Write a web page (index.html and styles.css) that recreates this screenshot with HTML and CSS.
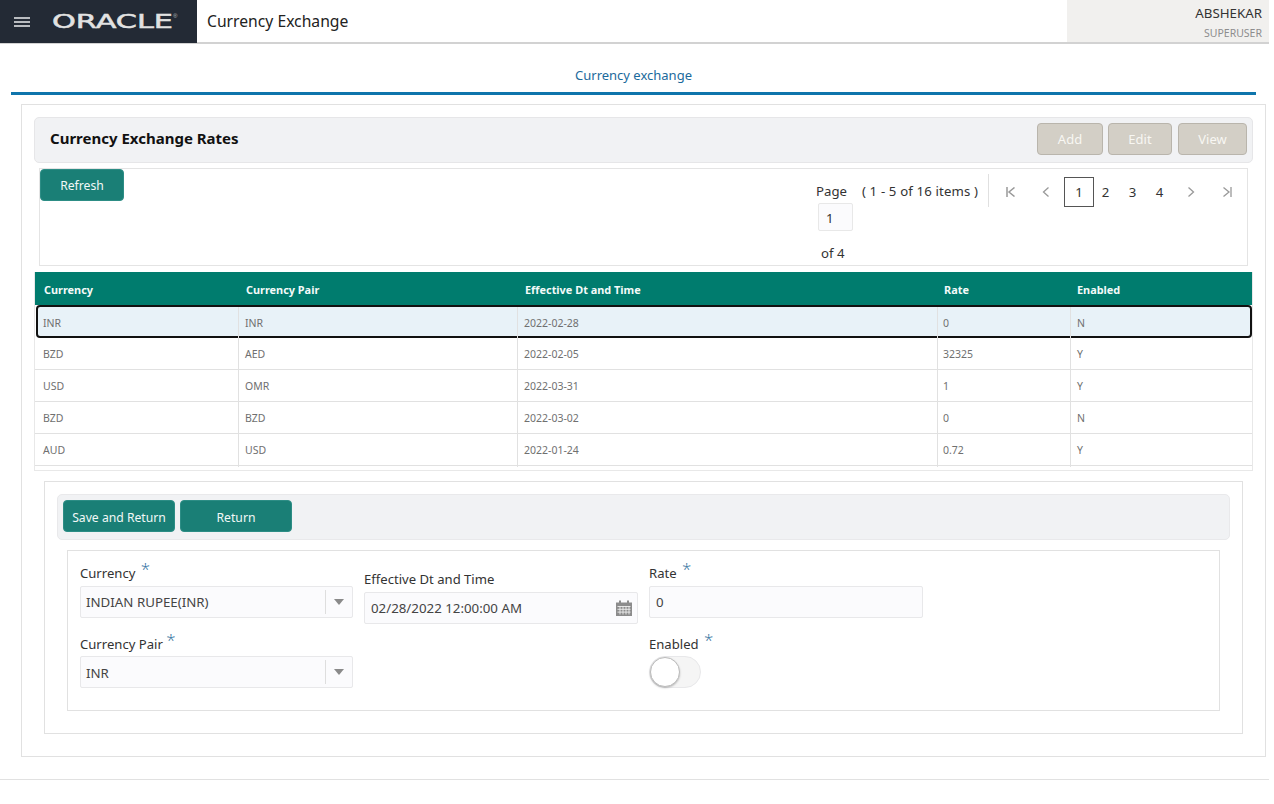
FILE: index.html
```html
<!DOCTYPE html>
<html lang="en">
<head>
<meta charset="utf-8">
<title>Currency Exchange</title>
<link rel="stylesheet" href="styles.css">
</head>
<body>
<div class="app">
  <header class="topbar">
    <div class="brand">
      <svg class="burger" width="16" height="10" viewBox="0 0 16 10"><path d="M0 1h16M0 5h16M0 9h16" stroke="#b9bcc0" stroke-width="1.8" fill="none"/></svg>
      <svg class="logo" width="130" height="20" viewBox="0 0 130 20"><text x="0" y="15.500" textLength="121" lengthAdjust="spacingAndGlyphs" class="logo-text">ORACLE</text><text x="121" y="6" class="logo-mark">®</text></svg>
    </div>
    <div class="page-title">Currency Exchange</div>
    <div class="user">
      <div class="user-name">ABSHEKAR</div>
      <div class="user-role">SUPERUSER</div>
    </div>
  </header>

  <nav class="tabs"><span class="tab-label">Currency exchange</span></nav>

  <main class="panel">
    <div class="title-bar">
      <h1 class="title">Currency Exchange Rates</h1>
      <div class="title-actions">
        <button class="btn-muted btn-add">Add</button>
        <button class="btn-muted btn-edit">Edit</button>
        <button class="btn-muted btn-view">View</button>
      </div>
    </div>

    <div class="toolbar">
      <button class="btn-teal btn-refresh">Refresh</button>
      <div class="pager">
        <div class="pager-info">
          <div class="pager-line"><span>Page</span><span class="pager-count">( 1 - 5 of 16 items )</span></div>
          <div class="pager-input">1</div>
          <div class="pager-of">of 4</div>
        </div>
        <div class="pager-nav">
          <svg class="nav-first" width="10" height="10" viewBox="0 0 10 10"><path d="M1 0v10M8.500 .5L3 5l5.500 4.500" stroke="#999" stroke-width="1.500" fill="none"/></svg>
          <svg class="nav-prev" width="8" height="10" viewBox="0 0 8 10"><path d="M6.500 .5L1.500 5l5 4.500" stroke="#999" stroke-width="1.300" fill="none"/></svg>
          <span class="page-num page-current">1</span>
          <span class="page-num">2</span>
          <span class="page-num">3</span>
          <span class="page-num">4</span>
          <svg class="nav-next" width="8" height="10" viewBox="0 0 8 10"><path d="M1.500 .5L6.500 5l-5 4.500" stroke="#999" stroke-width="1.300" fill="none"/></svg>
          <svg class="nav-last" width="10" height="10" viewBox="0 0 10 10"><path d="M9 0v10M1.500 .5L7 5l-5.500 4.500" stroke="#999" stroke-width="1.300" fill="none"/></svg>
        </div>
      </div>
    </div>

    <div class="grid">
      <div class="row row-head"><div>Currency</div><div>Currency Pair</div><div>Effective Dt and Time</div><div>Rate</div><div>Enabled</div></div>
      <div class="row row-selected"><div>INR</div><div>INR</div><div>2022-02-28</div><div>0</div><div>N</div></div>
      <div class="row"><div>BZD</div><div>AED</div><div>2022-02-05</div><div>32325</div><div>Y</div></div>
      <div class="row"><div>USD</div><div>OMR</div><div>2022-03-31</div><div>1</div><div>Y</div></div>
      <div class="row"><div>BZD</div><div>BZD</div><div>2022-03-02</div><div>0</div><div>N</div></div>
      <div class="row"><div>AUD</div><div>USD</div><div>2022-01-24</div><div>0.72</div><div>Y</div></div>
    </div>

    <section class="form-card">
      <div class="form-actions">
        <button class="btn-teal btn-wide">Save and Return</button>
        <button class="btn-teal btn-wide">Return</button>
      </div>
      <div class="form-body">
        <div class="form-col form-col-first">
          <div class="field">
            <label class="label">Currency <span class="req">*</span></label>
            <div class="input select"><span>INDIAN RUPEE(INR)</span><span class="select-btn"><i class="caret"></i></span></div>
          </div>
          <div class="field field-second">
            <label class="label">Currency Pair <span class="req req-tight">*</span></label>
            <div class="input select select-low"><span>INR</span><span class="select-btn"><i class="caret"></i></span></div>
          </div>
        </div>
        <div class="form-col form-col-date">
          <div class="field">
            <label class="label">Effective Dt and Time</label>
            <div class="input date"><span>02/28/2022 12:00:00 AM</span>
              <svg width="16" height="16" viewBox="0 0 16 16"><path d="M0 2.500h16V16H0z" fill="#8c8c8c"/><path d="M3 0.500h2v4H3zM11 0.500h2v4h-2z" fill="#8c8c8c"/><path d="M1.500 6.500h13M1.500 9.300h13M1.500 12.100h13M4 6v8.500M7 6v8.500M10 6v8.500M13 6v8.500" stroke="#eee" stroke-width=".9" fill="none"/></svg>
            </div>
          </div>
        </div>
        <div class="form-col">
          <div class="field">
            <label class="label">Rate <span class="req">*</span></label>
            <div class="input rate"><span>0</span></div>
          </div>
          <div class="field field-second">
            <label class="label">Enabled <span class="req">*</span></label>
            <div class="switch"><span class="knob"></span></div>
          </div>
        </div>
      </div>
    </section>
  </main>
  <div class="page-end"></div>
</div>
</body>
</html>
```
FILE: styles.css
```css
* { box-sizing: border-box; }
html, body { margin: 0; padding: 0; background: #fff; }
body { font-family: "Noto Sans", "Open Sans", sans-serif; font-size: 14px; color: #333; }
.app { width: 1274px; height: 804px; overflow: hidden; }

.topbar { display: flex; width: 1269px; height: 44px; border-bottom: 2px solid #d2d2d2; }
.brand { width: 197px; height: 43px; margin-bottom: -1px; background: #232a35; display: flex; align-items: center; padding-left: 14px; }
.burger { margin-right: 22px; }
.logo { overflow: visible; }
.logo-text { font-family: "DejaVu Sans", sans-serif; font-size: 19px; font-weight: 400; fill: #e2e2e2; stroke: #e2e2e2; stroke-width: .5px; }
.logo-mark { font-family: "Liberation Sans", sans-serif; font-size: 6px; fill: #bbb; }
.page-title { flex: 1; padding-left: 10px; font-size: 15.700px; line-height: 42px; color: #222; }
.user { width: 202px; height: 42px; background: #f1f0ee; text-align: right; padding-right: 7px; }
.user-name { font-size: 13.300px; line-height: 16px; padding-top: 5px; color: #333; height: 26px; }
.user-role { font-size: 10.500px; line-height: 14px; color: #8d8d8d; }

.tabs { margin: 0 13px 0 11px; height: 51px; border-bottom: 3px solid #0f75ac; text-align: center; padding-top: 22px; width: 1245px; }
.tab-label { font-size: 13px; line-height: 18px; color: #1b6a9c; display: block; }

.panel { margin: 9px 0 0 21px; width: 1245px; height: 653px; border: 1px solid #e1e1e1; padding: 12px 12px 0; }
.title-bar { display: flex; justify-content: space-between; align-items: center; height: 46px; background: #f1f2f4; border: 1px solid #e6e6e8; border-radius: 5px; padding: 0 5px 0 15px; }
.title { margin: 0 0 4px; font-size: 15px; font-weight: 700; color: #111; }
.title-actions { display: flex; gap: 5px; margin-bottom: 2px; }
.btn-muted, .btn-teal { font: inherit; cursor: pointer; }
.btn-muted { height: 32px; background: #d3cfc6; border: 1px solid #b9b5ac; border-radius: 4px; color: #f8f7f3; font-size: 13px; padding: 0; }
.btn-add { width: 66px; }
.btn-edit { width: 64px; }
.btn-view { width: 69px; margin-left: 1px; }
.btn-teal { height: 32px; background: #1a7f76; border: 1px solid #2d8d85; border-radius: 4px; color: #f2f8f7; font-size: 12.200px; padding: 0; }

.toolbar { display: flex; justify-content: space-between; align-items: flex-start; margin: 5px 5px 0; height: 98px; border: 1px solid #e4e4e4; }
.btn-refresh { width: 84px; }
.pager { display: flex; margin-top: 7px; margin-right: 15px; }
.pager-info { width: 172px; font-size: 13.200px; color: #333; }
.pager-line { display: flex; gap: 15px; line-height: 17px; height: 27px; padding-top: 7px; }
.pager-count { letter-spacing: .15px; white-space: nowrap; }
.pager-input { width: 35px; height: 28px; margin-left: 2px; border: 1px solid #e8e8e8; border-radius: 2px; background: #fbfbfd; padding-left: 7px; line-height: 28px; }
.pager-of { margin: 13px 0 0 5px; line-height: 18px; }
.pager-nav { display: flex; align-items: center; height: 33px; margin-top: -2px; padding-top: 2px; border-left: 1px solid #e0e0e0; padding-left: 17px; }
.nav-first { margin-right: 26px; }
.nav-prev { margin-right: 14px; }
.page-num { width: 27px; text-align: center; font-size: 13.200px; color: #333; line-height: 28px; }
.page-current { width: 30px; height: 30px; border: 1px solid #555; margin-right: -2px; }
.nav-next { margin-left: 14px; margin-right: 27px; }

.grid { margin-top: 6px; width: 1219px; border: solid #e8e8e8; border-width: 0 1px 1px; height: 199px; }
.row { display: grid; grid-template-columns: 204px 279px 420px 133px 1fr; height: 32px; border-bottom: 1px solid #e1e1e1; font-size: 10.500px; color: #707070; }
.row > div { padding-left: 6px; line-height: 33px; border-right: 1px solid #e1e1e1; }
.row > div:first-child { padding-left: 8px; }
.row > div:nth-child(4) { padding-left: 5px; }
.row > div:last-child { border-right: 0; }
.row-head { height: 33px; background: #007c6e; color: #f4faf9; font-weight: 700; font-size: 10.900px; border-bottom: 0; }
.row-head > div { border-right: 0; line-height: 36px; padding-left: 7px; }
.row-head > div:first-child { padding-left: 9px; }
.row-head > div:nth-child(4) { padding-left: 6px; }
.row-head > div:last-child { padding-left: 6px; }
.row-selected { height: 33px; margin-left: 1px; background: #e8f2f8; border: 2px solid #111; border-radius: 4px; grid-template-columns: 201px 279px 420px 133px 1fr; }
.row-selected > div:first-child { padding-left: 5px; }

.form-card { margin: 10px 10px 0 10px; height: 253px; border: 1px solid #e1e1e1; padding: 12px 12px 0; }
.form-actions { display: flex; gap: 5px; height: 46px; background: #f1f2f4; border: 1px solid #e9e9eb; border-radius: 5px; padding: 5px; }
.btn-wide { width: 112px; padding-top: 2px; }
.form-body { display: flex; margin: 10px 10px 0 10px; height: 161px; border: 1px solid #e1e1e1; padding-left: 12px; gap: 11px; }
.form-col { width: 274px; }
.form-col-first { width: 273px; }
.form-col-date { padding-top: 19px; }
.field { display: flex; flex-direction: column; }
.label { height: 35px; font-size: 13.100px; line-height: 18px; padding-top: 12px; color: #333; }
.form-col-date .label { height: 22px; padding-top: 0; }
.field-second { margin-top: 3px; }
.field-second .label { padding-top: 13px; }
.req { color: #2a6d9c; font-family: "Open Sans", sans-serif; font-weight: 300; font-size: 17px; margin-left: 2px; position: relative; top: -3px; line-height: 1; }
.req-tight { margin-left: 0; }
.input { display: flex; align-items: center; justify-content: space-between; height: 32px; border: 1px solid #e8e8ea; border-radius: 2px; background: #fbfbfd; padding: 0 5px; font-size: 13.300px; color: #444; }
.select { width: 273px; padding-right: 0; }
.select-low > span:first-child { padding-top: 2px; }
.select-btn { display: flex; align-items: center; justify-content: center; width: 27px; height: 24px; border-left: 1px solid #dedede; }
.caret { display: block; border: solid transparent; border-width: 6px 5px 0; border-top-color: #8a8a8a; }
.date { padding-left: 6px; }
.rate { padding-left: 6px; }
.switch { width: 52px; height: 32px; border: 1px solid #e8e8ea; border-radius: 16px; background: #f5f5f5; }
.knob { display: block; width: 30px; height: 30px; border-radius: 50%; background: #fff; border: 1px solid #bbb; box-shadow: 0 1px 2px rgba(0,0,0,.25); }
.page-end { margin-top: 22px; width: 1269px; border-top: 1px solid #e1e1e1; }
```
